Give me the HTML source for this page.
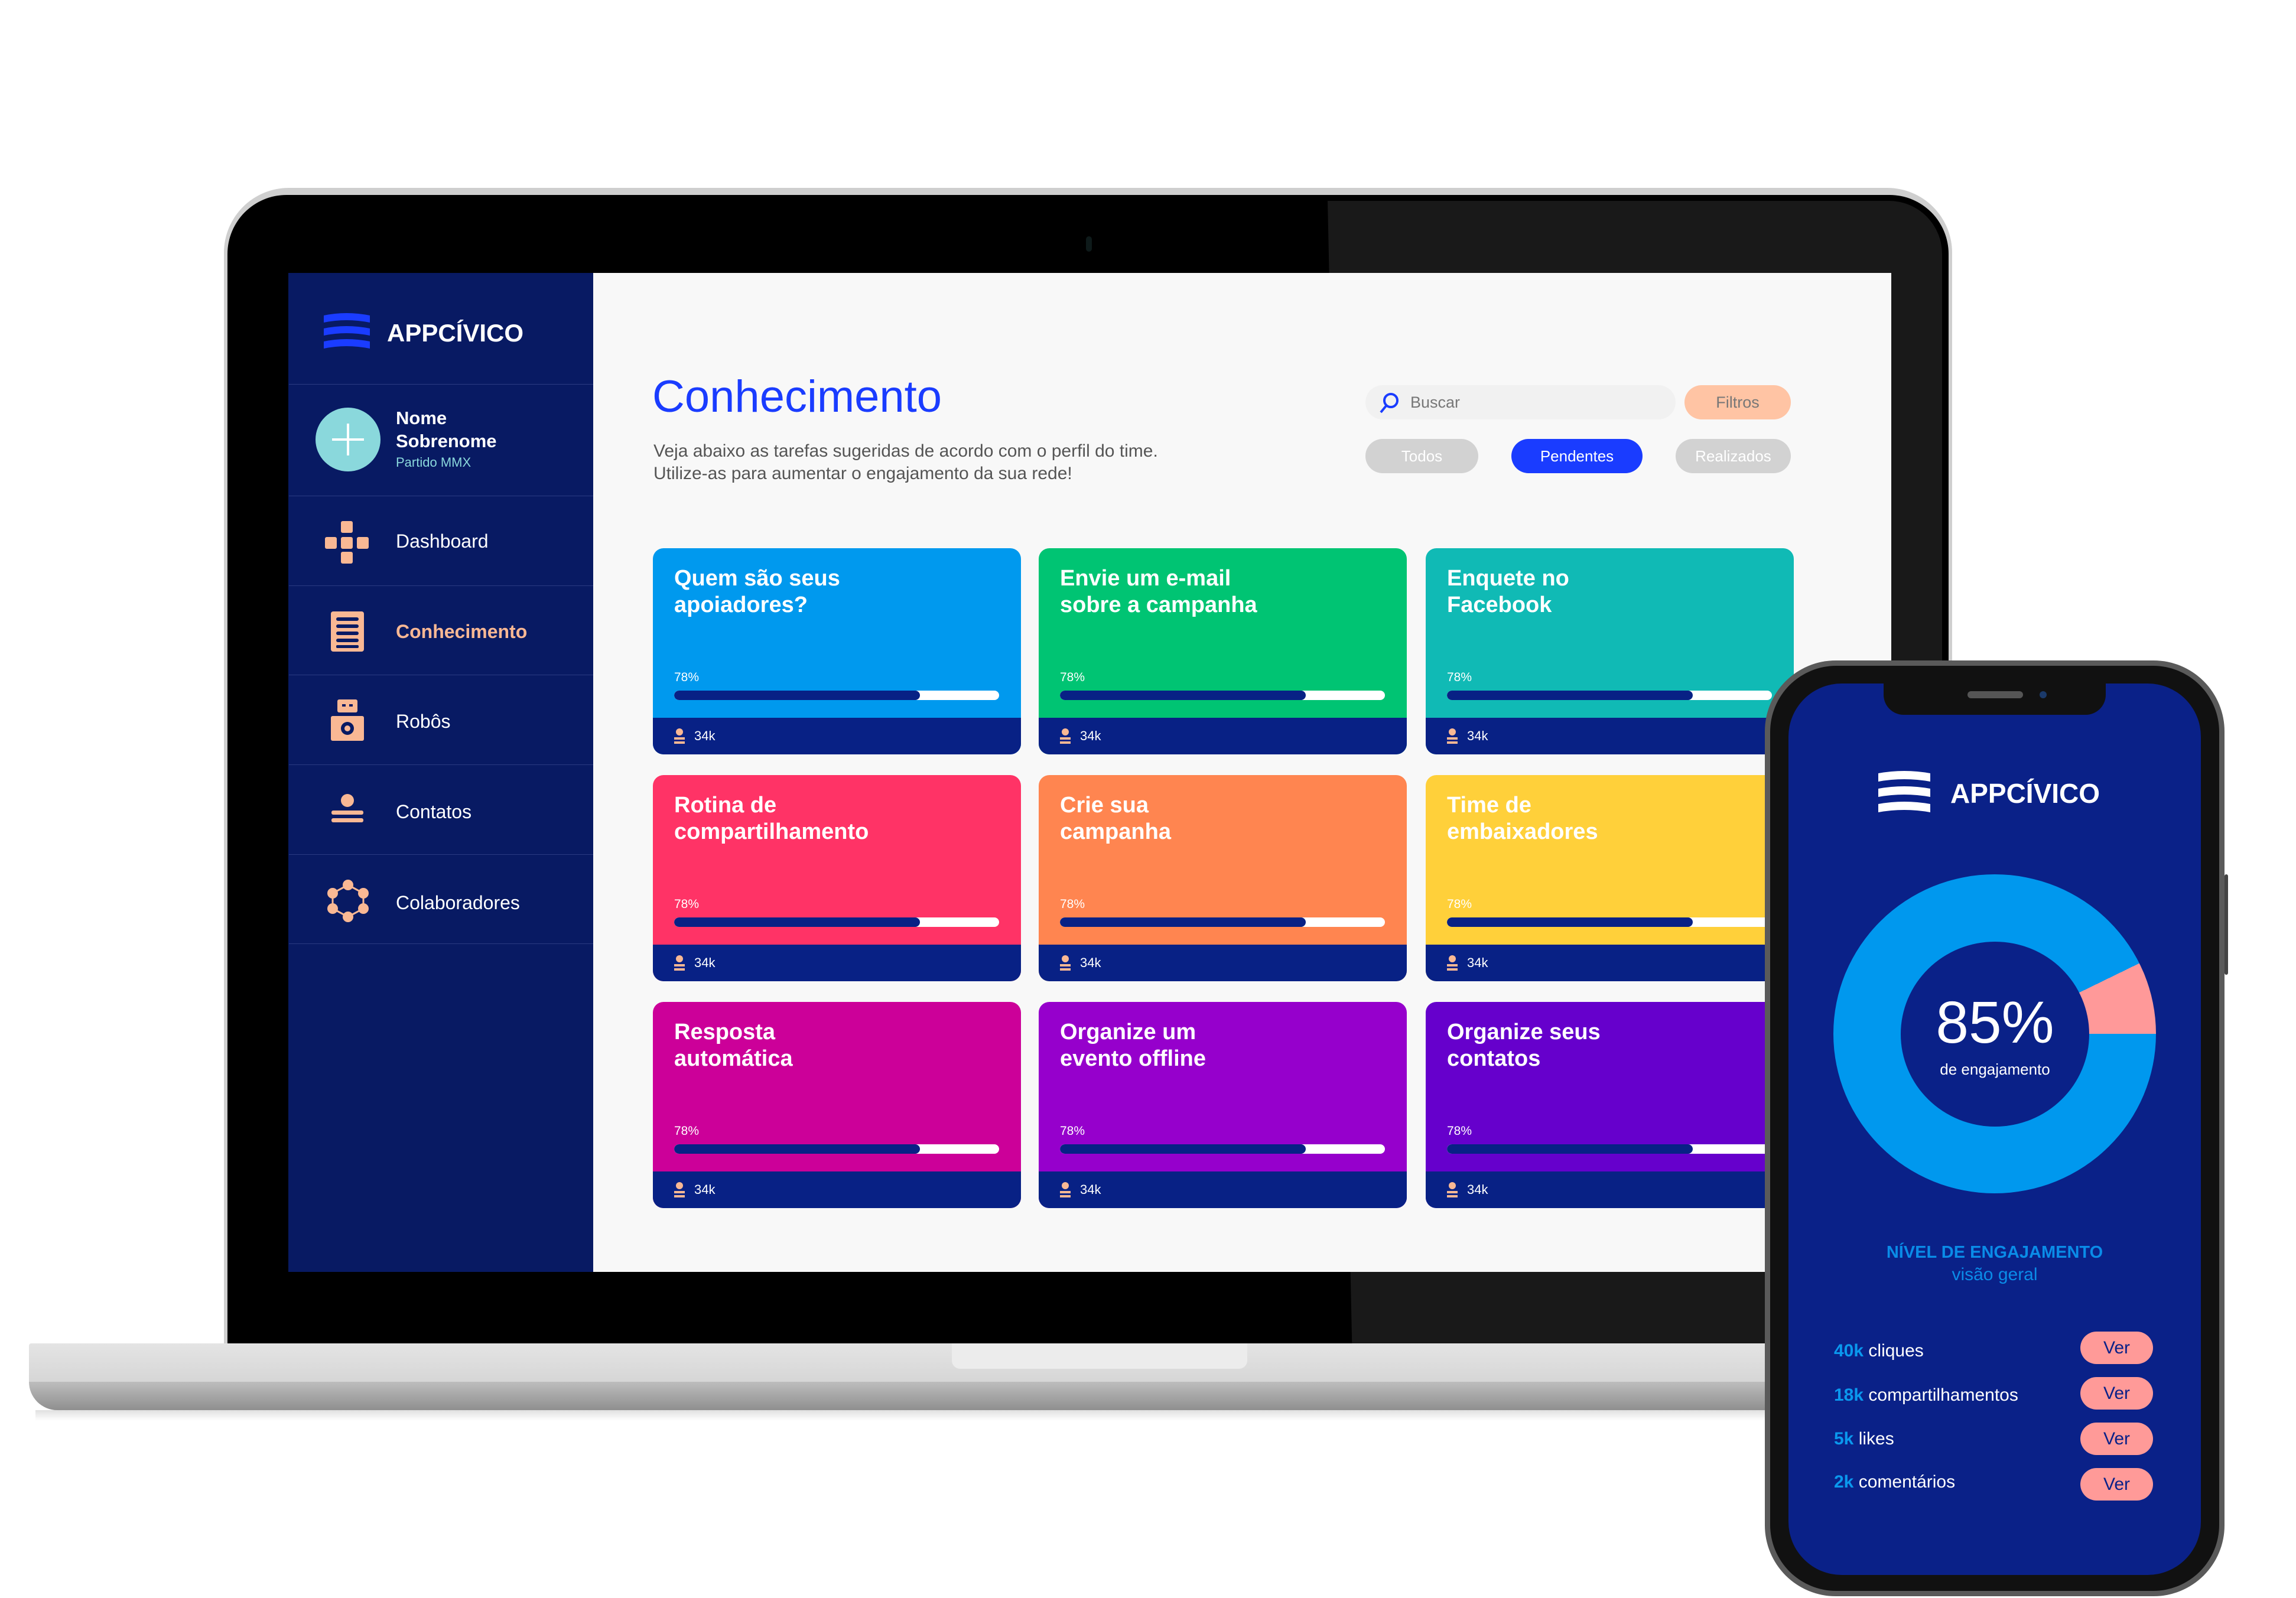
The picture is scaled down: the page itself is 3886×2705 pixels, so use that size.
<!DOCTYPE html>
<html><head><meta charset="utf-8"><style>
*{margin:0;padding:0;box-sizing:border-box}
body{width:3886px;height:2705px;background:#fff;position:relative;overflow:hidden;font-family:"Liberation Sans",sans-serif}
.a{position:absolute}
.nav{position:absolute;left:489px;width:515px;height:1px;background:#2b3b82}
.navt{position:absolute;left:670px;font-size:32px;color:#fff}
.card{position:absolute;width:623px;height:349px;border-radius:18px;overflow:hidden}
.card .t{position:absolute;left:36px;top:29px;font-size:38px;font-weight:bold;color:#fff;line-height:45px}
.card .p{position:absolute;left:36px;top:207px;font-size:21px;color:#fff}
.card .bar{position:absolute;left:36px;top:241px;width:550px;height:16px;border-radius:8px;background:#fff;overflow:hidden}
.card .bar i{position:absolute;left:0;top:0;width:416px;height:16px;border-radius:8px;background:#082185}
.card .f{position:absolute;left:0;bottom:0;width:100%;height:62px;background:#082185}
.card .f span{position:absolute;left:70px;top:18px;font-size:22px;color:#fff}
.card .f b{position:absolute;left:36px;top:18px;width:18px;height:28px}
.pill{position:absolute;height:58px;border-radius:29px;font-size:26px;text-align:center;line-height:58px}
.st{position:absolute;left:3104px;font-size:30px;color:#fff}
.st b{color:#0a98ee}
.ver{position:absolute;left:3521px;width:123px;height:55px;border-radius:28px;background:#ff9a98;color:#0a2188;font-size:30px;text-align:center;line-height:55px}
</style></head><body>

<div class="a" style="left:379px;top:318px;width:2925px;height:1970px;border-radius:110px 110px 0 0;background:#cfcfcf"></div>
<div class="a" style="left:385px;top:330px;width:2913px;height:1960px;border-radius:100px 100px 0 0;background:#000"></div>
<div class="a" style="left:2247px;top:340px;width:1040px;height:1950px;background:#191919;clip-path:polygon(0 0,100% 0,100% 100%,4% 100%);border-radius:0 90px 0 0"></div>
<div class="a" style="left:1838px;top:400px;width:10px;height:26px;border-radius:5px;background:#0e1a1a"></div>

<div class="a" style="left:488px;top:462px;width:2713px;height:1691px;background:#f8f8f8"></div>
<div class="a" style="left:488px;top:462px;width:516px;height:1691px;background:#081a63"></div>

<svg class="a" style="left:546px;top:530px" width="82" height="66" viewBox="0 0 82 66">
<path d="M2 4 Q40 -4 80 4 L80 16 Q40 8 2 16Z M2 26 Q40 18 80 26 L80 38 Q40 30 2 38Z M2 48 Q40 40 80 48 L80 60 Q40 52 2 60Z" fill="#1a3cff"/>
</svg>
<div class="a" style="left:655px;top:540px;font-size:42px;font-weight:bold;color:#fff">APPCÍVICO</div>
<div class="nav" style="top:650px"></div>
<div class="a" style="left:534px;top:690px;width:110px;height:108px;border-radius:50%;background:#8ad8dc"></div>
<div class="a" style="left:587px;top:717px;width:4px;height:54px;background:#fff"></div>
<div class="a" style="left:562px;top:742px;width:54px;height:4px;background:#fff"></div>
<div class="a" style="left:670px;top:688px;font-size:31px;font-weight:bold;color:#fff;line-height:39px">Nome<br>Sobrenome</div>
<div class="a" style="left:670px;top:770px;font-size:22px;color:#8ad8dc">Partido MMX</div>
<div class="nav" style="top:839px"></div>
<svg class="a" style="left:548px;top:880px" width="80" height="76"><g fill="#f9b894"><rect x="29" y="2" width="20" height="20" rx="3"/><rect x="2" y="29" width="20" height="20" rx="3"/><rect x="29" y="29" width="20" height="20" rx="3"/><rect x="56" y="29" width="20" height="20" rx="3"/><rect x="29" y="54" width="20" height="20" rx="3"/></g></svg>
<div class="navt" style="top:898px">Dashboard</div>
<div class="nav" style="top:991px"></div>
<svg class="a" style="left:560px;top:1035px" width="56" height="68"><rect x="0" y="0" width="56" height="68" rx="4" fill="#f9b894"/><g fill="#081a63"><rect x="9" y="10" width="38" height="6" rx="3"/><rect x="9" y="22" width="38" height="6" rx="3"/><rect x="9" y="34" width="38" height="6" rx="3"/><rect x="9" y="46" width="38" height="6" rx="3"/><rect x="9" y="57" width="38" height="5" rx="2"/></g></svg>
<div class="navt" style="top:1051px;color:#f9b894;font-weight:bold">Conhecimento</div>
<div class="nav" style="top:1142px"></div>
<svg class="a" style="left:560px;top:1184px" width="56" height="70"><g fill="#f9b894"><rect x="11" y="0" width="34" height="22" rx="3"/><rect x="0" y="28" width="56" height="42" rx="3"/></g><g fill="#081a63"><rect x="19" y="8" width="6" height="4"/><rect x="31" y="8" width="6" height="4"/><circle cx="28" cy="49" r="11"/></g><circle cx="28" cy="49" r="5" fill="#f9b894"/></svg>
<div class="navt" style="top:1203px">Robôs</div>
<div class="nav" style="top:1294px"></div>
<svg class="a" style="left:561px;top:1344px" width="54" height="54"><g fill="#f9b894"><circle cx="27" cy="11" r="11"/><rect x="0" y="28" width="54" height="7" rx="3"/><rect x="0" y="41" width="54" height="7" rx="3"/></g></svg>
<div class="navt" style="top:1356px">Contatos</div>
<div class="nav" style="top:1446px"></div>
<svg class="a" style="left:552px;top:1488px" width="74" height="74"><g stroke="#f9b894" stroke-width="3" fill="none"><polygon points="37,10 63,24 63,50 37,64 11,50 11,24"/></g><g fill="#f9b894"><circle cx="37" cy="10" r="9"/><circle cx="63" cy="24" r="9"/><circle cx="63" cy="50" r="9"/><circle cx="37" cy="64" r="9"/><circle cx="11" cy="50" r="9"/><circle cx="11" cy="24" r="9"/></g></svg>
<div class="navt" style="top:1510px">Colaboradores</div>
<div class="nav" style="top:1597px"></div>

<div class="a" style="left:1104px;top:628px;font-size:76px;color:#1a3cff">Conhecimento</div>
<div class="a" style="left:1106px;top:745px;font-size:30px;color:#555;line-height:38px">Veja abaixo as tarefas sugeridas de acordo com o perfil do time.<br>Utilize-as para aumentar o engajamento da sua rede!</div>
<div class="pill" style="left:2311px;top:652px;width:525px;background:#f1f1f1;text-align:left;padding-left:76px;color:#777;font-size:27px">Buscar</div>
<svg class="a" style="left:2331px;top:661px" width="40" height="40"><circle cx="23" cy="17" r="11" stroke="#1a3cff" stroke-width="4" fill="none"/><line x1="15" y1="26" x2="6" y2="37" stroke="#1a3cff" stroke-width="4"/></svg>
<div class="pill" style="left:2851px;top:652px;width:180px;background:#ffc4a4;color:#777;font-size:27px">Filtros</div>
<div class="pill" style="left:2311px;top:743px;width:191px;background:#d2d2d2;color:#fff">Todos</div>
<div class="pill" style="left:2558px;top:743px;width:222px;background:#1a3cff;color:#fff">Pendentes</div>
<div class="pill" style="left:2836px;top:743px;width:195px;background:#d2d2d2;color:#fff">Realizados</div>

<div class="card" style="left:1105px;top:928px;background:#0099ee"><div class="t">Quem são seus<br>apoiadores?</div><div class="p">78%</div><div class="bar"><i></i></div><div class="f"><b><svg width="18" height="28"><g fill="#f9b894"><circle cx="9" cy="6" r="6"/><rect y="15" width="18" height="4"/><rect y="22" width="18" height="4"/></g></svg></b><span>34k</span></div></div>
<div class="card" style="left:1758px;top:928px;background:#00c473"><div class="t">Envie um e-mail<br>sobre a campanha</div><div class="p">78%</div><div class="bar"><i></i></div><div class="f"><b><svg width="18" height="28"><g fill="#f9b894"><circle cx="9" cy="6" r="6"/><rect y="15" width="18" height="4"/><rect y="22" width="18" height="4"/></g></svg></b><span>34k</span></div></div>
<div class="card" style="left:2413px;top:928px;background:#10bab5"><div class="t">Enquete no<br>Facebook</div><div class="p">78%</div><div class="bar"><i></i></div><div class="f"><b><svg width="18" height="28"><g fill="#f9b894"><circle cx="9" cy="6" r="6"/><rect y="15" width="18" height="4"/><rect y="22" width="18" height="4"/></g></svg></b><span>34k</span></div></div>
<div class="card" style="left:1105px;top:1312px;background:#ff3366"><div class="t">Rotina de<br>compartilhamento</div><div class="p">78%</div><div class="bar"><i></i></div><div class="f"><b><svg width="18" height="28"><g fill="#f9b894"><circle cx="9" cy="6" r="6"/><rect y="15" width="18" height="4"/><rect y="22" width="18" height="4"/></g></svg></b><span>34k</span></div></div>
<div class="card" style="left:1758px;top:1312px;background:#ff8550"><div class="t">Crie sua<br>campanha</div><div class="p">78%</div><div class="bar"><i></i></div><div class="f"><b><svg width="18" height="28"><g fill="#f9b894"><circle cx="9" cy="6" r="6"/><rect y="15" width="18" height="4"/><rect y="22" width="18" height="4"/></g></svg></b><span>34k</span></div></div>
<div class="card" style="left:2413px;top:1312px;background:#ffd03a"><div class="t">Time de<br>embaixadores</div><div class="p">78%</div><div class="bar"><i></i></div><div class="f"><b><svg width="18" height="28"><g fill="#f9b894"><circle cx="9" cy="6" r="6"/><rect y="15" width="18" height="4"/><rect y="22" width="18" height="4"/></g></svg></b><span>34k</span></div></div>
<div class="card" style="left:1105px;top:1696px;background:#cc0099"><div class="t">Resposta<br>automática</div><div class="p">78%</div><div class="bar"><i></i></div><div class="f"><b><svg width="18" height="28"><g fill="#f9b894"><circle cx="9" cy="6" r="6"/><rect y="15" width="18" height="4"/><rect y="22" width="18" height="4"/></g></svg></b><span>34k</span></div></div>
<div class="card" style="left:1758px;top:1696px;background:#9600cc"><div class="t">Organize um<br>evento offline</div><div class="p">78%</div><div class="bar"><i></i></div><div class="f"><b><svg width="18" height="28"><g fill="#f9b894"><circle cx="9" cy="6" r="6"/><rect y="15" width="18" height="4"/><rect y="22" width="18" height="4"/></g></svg></b><span>34k</span></div></div>
<div class="card" style="left:2413px;top:1696px;background:#6600cc"><div class="t">Organize seus<br>contatos</div><div class="p">78%</div><div class="bar"><i></i></div><div class="f"><b><svg width="18" height="28"><g fill="#f9b894"><circle cx="9" cy="6" r="6"/><rect y="15" width="18" height="4"/><rect y="22" width="18" height="4"/></g></svg></b><span>34k</span></div></div>

<div class="a" style="left:49px;top:2274px;width:3640px;height:66px;background:linear-gradient(#e4e4e4,#d6d6d6);border-radius:4px 4px 0 0"></div>
<div class="a" style="left:49px;top:2339px;width:3640px;height:48px;background:linear-gradient(#bdbdbd,#8f8f8f);border-radius:0 0 60px 60px"></div>
<div class="a" style="left:1611px;top:2274px;width:500px;height:43px;background:#ececec;border-radius:0 0 14px 14px"></div>
<div class="a" style="left:60px;top:2387px;width:3620px;height:18px;background:linear-gradient(rgba(0,0,0,0.12),rgba(0,0,0,0))"></div>

<div class="a" style="left:2987px;top:1118px;width:778px;height:1584px;border-radius:120px;background:#5a5a5a"></div>
<div class="a" style="left:3765px;top:1480px;width:6px;height:170px;background:#444;border-radius:3px"></div>
<div class="a" style="left:2996px;top:1127px;width:760px;height:1566px;border-radius:112px;background:#111"></div>
<div class="a" style="left:3027px;top:1157px;width:698px;height:1509px;border-radius:90px;background:#0a2188"></div>
<div class="a" style="left:3188px;top:1150px;width:376px;height:60px;border-radius:0 0 34px 34px;background:#111"></div>
<div class="a" style="left:3330px;top:1170px;width:94px;height:12px;border-radius:6px;background:#555"></div>
<div class="a" style="left:3452px;top:1170px;width:12px;height:12px;border-radius:6px;background:#1b3a6a"></div>

<svg class="a" style="left:3177px;top:1305px" width="92" height="74" viewBox="0 0 92 74">
<path d="M2 4 Q46 -4 90 4 L90 18 Q46 10 2 18Z M2 30 Q46 22 90 30 L90 44 Q46 36 2 44Z M2 56 Q46 48 90 56 L90 70 Q46 62 2 70Z" fill="#fff"/>
</svg>
<div class="a" style="left:3301px;top:1316px;font-size:46px;font-weight:bold;color:#fff">APPCÍVICO</div>

<div class="a" style="left:3103px;top:1480px;width:546px;height:540px;border-radius:50%;background:conic-gradient(#0098ee 0deg 64deg,#ff9999 64deg 90deg,#0098ee 90deg 360deg)"></div>
<div class="a" style="left:3217px;top:1594px;width:319px;height:313px;border-radius:50%;background:#0a2188"></div>
<div class="a" style="left:3217px;top:1674px;width:319px;text-align:center;font-size:100px;color:#fff">85%</div>
<div class="a" style="left:3217px;top:1795px;width:319px;text-align:center;font-size:26px;color:#fff">de engajamento</div>
<div class="a" style="left:3027px;top:2104px;width:698px;text-align:center;font-size:29px;font-weight:bold;color:#0a8ce8">NÍVEL DE ENGAJAMENTO</div>
<div class="a" style="left:3027px;top:2141px;width:698px;text-align:center;font-size:30px;color:#0a8ce8">visão geral</div>

<div class="st" style="top:2270px"><b>40k</b> cliques</div>
<div class="st" style="top:2345px"><b>18k</b> compartilhamentos</div>
<div class="st" style="top:2419px"><b>5k</b> likes</div>
<div class="st" style="top:2492px"><b>2k</b> comentários</div>
<div class="ver" style="top:2254px">Ver</div>
<div class="ver" style="top:2331px">Ver</div>
<div class="ver" style="top:2408px">Ver</div>
<div class="ver" style="top:2485px">Ver</div>
</body></html>
